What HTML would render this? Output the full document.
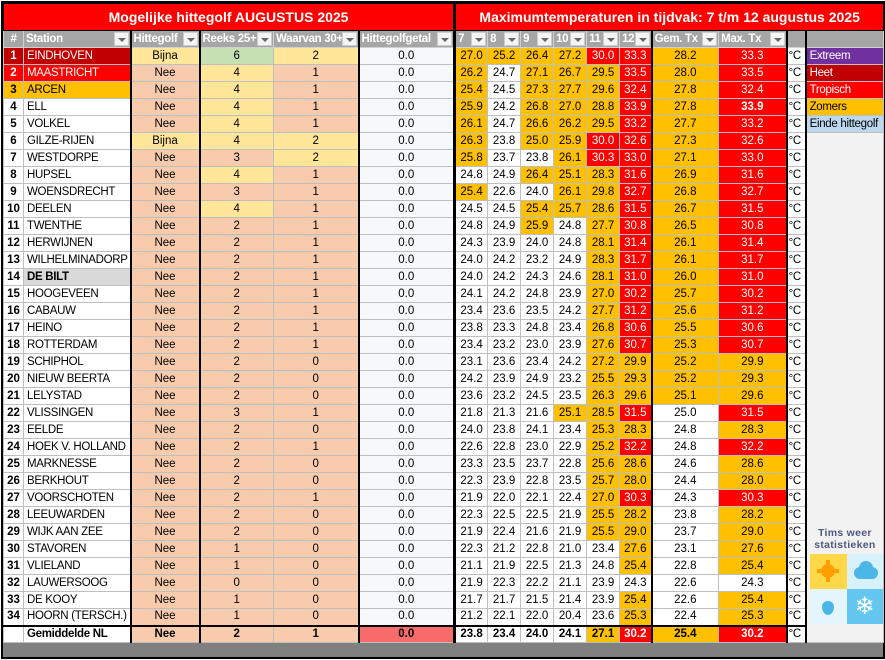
<!DOCTYPE html>
<html><head><meta charset="utf-8">
<style>
*{margin:0;padding:0;box-sizing:border-box}
body{width:885px;height:660px;background:#fff;font-family:"Liberation Sans",Arial,sans-serif;overflow:hidden}
#wrap{position:absolute;left:1px;top:1px;width:884px;height:658px;border:2px solid #000;background:#808080}
table{position:absolute;left:0;top:0;border-collapse:collapse;table-layout:fixed;width:880px;font-size:11.5px}
td{height:17px;border:1px solid #bfbfbf;text-align:center;white-space:nowrap;overflow:hidden;padding:0;line-height:15px;color:#000;background:#fff}
tr.t td{height:27px;background:#f00;color:#fff;font-weight:bold;font-size:14px;border:1px solid #000}
tr.hd td{background:#a6a6a6;color:#fff;font-weight:bold;text-align:left;padding-left:2px;position:relative;border-color:#d0d0d0;letter-spacing:-0.3px;font-size:11.5px}
.dd{position:absolute;right:1px;top:1px;width:15px;height:14px;background:#f4f4f4;border:1px solid #ccc}
.dd:after{content:"";position:absolute;left:3px;top:5px;border-left:4px solid transparent;border-right:4px solid transparent;border-top:4px solid #666}
td.n{font-weight:bold}
td.s{text-align:left;padding-left:3px;letter-spacing:-0.3px}
td.y{background:#ffe699}
td.p{background:#f8cbad}
td.g{background:#c6e0b4}
td.h{background:#f7f8fc}
td.o{background:#ffc000}
td.r{background:#f00;color:#fff}
td.c{border-left:2px solid #000;border-right:2px solid #000;text-align:left;padding-left:1px;letter-spacing:-0.3px}
td.L{text-align:left;padding-left:3px;background:#f2f2f2;letter-spacing:-0.3px}
.k3{border-left:2px solid #000!important}
.k7{border-left:3px solid #000!important}
tr.av td{border-top:2px solid #000;font-weight:bold}
</style></head><body>
<div id="wrap">
<table>
<colgroup><col style="width:20px"><col style="width:107px"><col style="width:69px"><col style="width:74px"><col style="width:85px"><col style="width:96px"><col style="width:33px"><col style="width:33px"><col style="width:33px"><col style="width:33px"><col style="width:33px"><col style="width:32px"><col style="width:67px"><col style="width:68px"><col style="width:19px"><col style="width:78px"></colgroup>
<tr class="t"><td colspan="6">Mogelijke hittegolf AUGUSTUS 2025</td><td colspan="10" class="k7">Maximumtemperaturen in tijdvak: 7 t/m 12 augustus 2025</td></tr>
<tr class="hd"><td style="text-align:center;padding:0">#</td><td>Station<span class="dd"></span></td><td class="k3">Hittegolf<span class="dd"></span></td><td class="k3">Reeks 25+<span class="dd"></span></td><td>Waarvan 30+<span class="dd"></span></td><td class="k3">Hittegolfgetal<span class="dd"></span></td><td class="k7">7<span class="dd"></span></td><td>8<span class="dd"></span></td><td>9<span class="dd"></span></td><td>10<span class="dd"></span></td><td>11<span class="dd"></span></td><td>12<span class="dd"></span></td><td class="k3">Gem. Tx<span class="dd"></span></td><td>Max. Tx<span class="dd"></span></td><td class="k3"></td><td class="k3"></td></tr>
<tr><td class="n" style="background:#c00000;color:#fff">1</td><td class="s" style="background:#c00000;color:#fff">EINDHOVEN</td><td class="y k3">Bijna</td><td class="g k3">6</td><td class="y">2</td><td class="h k3">0.0</td><td class="o k7">27.0</td><td class="o">25.2</td><td class="o">26.4</td><td class="o">27.2</td><td class="r">30.0</td><td class="r">33.3</td><td class="o k3">28.2</td><td class="r">33.3</td><td class="c">°C</td><td class="L" style="background:#7030a0;color:#fff">Extreem</td></tr>
<tr><td class="n" style="background:#f00;color:#fff">2</td><td class="s" style="background:#f00;color:#fff">MAASTRICHT</td><td class="p k3">Nee</td><td class="y k3">4</td><td class="p">1</td><td class="h k3">0.0</td><td class="o k7">26.2</td><td>24.7</td><td class="o">27.1</td><td class="o">26.7</td><td class="o">29.5</td><td class="r">33.5</td><td class="o k3">28.0</td><td class="r">33.5</td><td class="c">°C</td><td class="L" style="background:#c00000;color:#fff">Heet</td></tr>
<tr><td class="n" style="background:#ffc000">3</td><td class="s" style="background:#ffc000">ARCEN</td><td class="p k3">Nee</td><td class="y k3">4</td><td class="p">1</td><td class="h k3">0.0</td><td class="o k7">25.4</td><td>24.5</td><td class="o">27.3</td><td class="o">27.7</td><td class="o">29.6</td><td class="r">32.4</td><td class="o k3">27.8</td><td class="r">32.4</td><td class="c">°C</td><td class="L" style="background:#f00;color:#fff">Tropisch</td></tr>
<tr><td class="n">4</td><td class="s">ELL</td><td class="p k3">Nee</td><td class="y k3">4</td><td class="p">1</td><td class="h k3">0.0</td><td class="o k7">25.9</td><td>24.2</td><td class="o">26.8</td><td class="o">27.0</td><td class="o">28.8</td><td class="r">33.9</td><td class="o k3">27.8</td><td class="r" style="font-weight:bold">33.9</td><td class="c">°C</td><td class="L" style="background:#ffc000">Zomers</td></tr>
<tr><td class="n">5</td><td class="s">VOLKEL</td><td class="p k3">Nee</td><td class="y k3">4</td><td class="p">1</td><td class="h k3">0.0</td><td class="o k7">26.1</td><td>24.7</td><td class="o">26.6</td><td class="o">26.2</td><td class="o">29.5</td><td class="r">33.2</td><td class="o k3">27.7</td><td class="r">33.2</td><td class="c">°C</td><td class="L" style="background:#bdd7ee">Einde hittegolf</td></tr>
<tr><td class="n">6</td><td class="s">GILZE-RIJEN</td><td class="y k3">Bijna</td><td class="y k3">4</td><td class="y">2</td><td class="h k3">0.0</td><td class="o k7">26.3</td><td>23.8</td><td class="o">25.0</td><td class="o">25.9</td><td class="r">30.0</td><td class="r">32.6</td><td class="o k3">27.3</td><td class="r">32.6</td><td class="c">°C</td><td class="L" rowspan="30" style="vertical-align:bottom;padding:0;position:relative">
<div style="position:absolute;left:0;right:0;top:394px;text-align:center;font-size:10.5px;line-height:12px;color:#4d5a80;font-weight:bold;letter-spacing:0.3px">Tims weer<br>statistieken</div>
<div style="position:absolute;left:3px;top:421px;width:73px;height:70px">
<div style="position:absolute;left:0;top:0;width:37px;height:35px;background:#ffd84a"><div style="position:absolute;left:11px;top:10px;width:14px;height:14px;border-radius:50%;background:#ffa000"></div><div style="position:absolute;left:7px;top:15px;width:22px;height:4px;background:#ffa000"></div><div style="position:absolute;left:16px;top:6px;width:4px;height:22px;background:#ffa000"></div></div>
<div style="position:absolute;left:37px;top:0;width:36px;height:35px;background:#d8f2fc"><div style="position:absolute;left:7px;top:13px;width:24px;height:12px;border-radius:8px;background:#4ab7e8"></div><div style="position:absolute;left:12px;top:7px;width:14px;height:14px;border-radius:50%;background:#4ab7e8"></div></div>
<div style="position:absolute;left:0;top:35px;width:37px;height:35px;background:#e4f5fd"><div style="position:absolute;left:12px;top:12px;width:12px;height:14px;border-radius:50% 50% 50% 50%/40% 40% 60% 60%;background:#4ab7e8"></div></div>
<div style="position:absolute;left:37px;top:35px;width:36px;height:35px;background:#64c7f0;color:#fff;font-size:24px;line-height:35px;text-align:center">❄</div>
</div></td></tr>
<tr><td class="n">7</td><td class="s">WESTDORPE</td><td class="p k3">Nee</td><td class="p k3">3</td><td class="y">2</td><td class="h k3">0.0</td><td class="o k7">25.8</td><td>23.7</td><td>23.8</td><td class="o">26.1</td><td class="r">30.3</td><td class="r">33.0</td><td class="o k3">27.1</td><td class="r">33.0</td><td class="c">°C</td></tr>
<tr><td class="n">8</td><td class="s">HUPSEL</td><td class="p k3">Nee</td><td class="y k3">4</td><td class="p">1</td><td class="h k3">0.0</td><td class="k7">24.8</td><td>24.9</td><td class="o">26.4</td><td class="o">25.1</td><td class="o">28.3</td><td class="r">31.6</td><td class="o k3">26.9</td><td class="r">31.6</td><td class="c">°C</td></tr>
<tr><td class="n">9</td><td class="s">WOENSDRECHT</td><td class="p k3">Nee</td><td class="p k3">3</td><td class="p">1</td><td class="h k3">0.0</td><td class="o k7">25.4</td><td>22.6</td><td>24.0</td><td class="o">26.1</td><td class="o">29.8</td><td class="r">32.7</td><td class="o k3">26.8</td><td class="r">32.7</td><td class="c">°C</td></tr>
<tr><td class="n">10</td><td class="s">DEELEN</td><td class="p k3">Nee</td><td class="y k3">4</td><td class="p">1</td><td class="h k3">0.0</td><td class="k7">24.5</td><td>24.5</td><td class="o">25.4</td><td class="o">25.7</td><td class="o">28.6</td><td class="r">31.5</td><td class="o k3">26.7</td><td class="r">31.5</td><td class="c">°C</td></tr>
<tr><td class="n">11</td><td class="s">TWENTHE</td><td class="p k3">Nee</td><td class="p k3">2</td><td class="p">1</td><td class="h k3">0.0</td><td class="k7">24.8</td><td>24.9</td><td class="o">25.9</td><td>24.8</td><td class="o">27.7</td><td class="r">30.8</td><td class="o k3">26.5</td><td class="r">30.8</td><td class="c">°C</td></tr>
<tr><td class="n">12</td><td class="s">HERWIJNEN</td><td class="p k3">Nee</td><td class="p k3">2</td><td class="p">1</td><td class="h k3">0.0</td><td class="k7">24.3</td><td>23.9</td><td>24.0</td><td>24.8</td><td class="o">28.1</td><td class="r">31.4</td><td class="o k3">26.1</td><td class="r">31.4</td><td class="c">°C</td></tr>
<tr><td class="n">13</td><td class="s">WILHELMINADORP</td><td class="p k3">Nee</td><td class="p k3">2</td><td class="p">1</td><td class="h k3">0.0</td><td class="k7">24.0</td><td>24.2</td><td>23.2</td><td>24.9</td><td class="o">28.3</td><td class="r">31.7</td><td class="o k3">26.1</td><td class="r">31.7</td><td class="c">°C</td></tr>
<tr><td class="n">14</td><td class="s" style="background:#d9d9d9;font-weight:bold">DE BILT</td><td class="p k3">Nee</td><td class="p k3">2</td><td class="p">1</td><td class="h k3">0.0</td><td class="k7">24.0</td><td>24.2</td><td>24.3</td><td>24.6</td><td class="o">28.1</td><td class="r">31.0</td><td class="o k3">26.0</td><td class="r">31.0</td><td class="c">°C</td></tr>
<tr><td class="n">15</td><td class="s">HOOGEVEEN</td><td class="p k3">Nee</td><td class="p k3">2</td><td class="p">1</td><td class="h k3">0.0</td><td class="k7">24.1</td><td>24.2</td><td>24.8</td><td>23.9</td><td class="o">27.0</td><td class="r">30.2</td><td class="o k3">25.7</td><td class="r">30.2</td><td class="c">°C</td></tr>
<tr><td class="n">16</td><td class="s">CABAUW</td><td class="p k3">Nee</td><td class="p k3">2</td><td class="p">1</td><td class="h k3">0.0</td><td class="k7">23.4</td><td>23.6</td><td>23.5</td><td>24.2</td><td class="o">27.7</td><td class="r">31.2</td><td class="o k3">25.6</td><td class="r">31.2</td><td class="c">°C</td></tr>
<tr><td class="n">17</td><td class="s">HEINO</td><td class="p k3">Nee</td><td class="p k3">2</td><td class="p">1</td><td class="h k3">0.0</td><td class="k7">23.8</td><td>23.3</td><td>24.8</td><td>23.4</td><td class="o">26.8</td><td class="r">30.6</td><td class="o k3">25.5</td><td class="r">30.6</td><td class="c">°C</td></tr>
<tr><td class="n">18</td><td class="s">ROTTERDAM</td><td class="p k3">Nee</td><td class="p k3">2</td><td class="p">1</td><td class="h k3">0.0</td><td class="k7">23.4</td><td>23.2</td><td>23.0</td><td>23.9</td><td class="o">27.6</td><td class="r">30.7</td><td class="o k3">25.3</td><td class="r">30.7</td><td class="c">°C</td></tr>
<tr><td class="n">19</td><td class="s">SCHIPHOL</td><td class="p k3">Nee</td><td class="p k3">2</td><td class="p">0</td><td class="h k3">0.0</td><td class="k7">23.1</td><td>23.6</td><td>23.4</td><td>24.2</td><td class="o">27.2</td><td class="o">29.9</td><td class="o k3">25.2</td><td class="o">29.9</td><td class="c">°C</td></tr>
<tr><td class="n">20</td><td class="s">NIEUW BEERTA</td><td class="p k3">Nee</td><td class="p k3">2</td><td class="p">0</td><td class="h k3">0.0</td><td class="k7">24.2</td><td>23.9</td><td>24.9</td><td>23.2</td><td class="o">25.5</td><td class="o">29.3</td><td class="o k3">25.2</td><td class="o">29.3</td><td class="c">°C</td></tr>
<tr><td class="n">21</td><td class="s">LELYSTAD</td><td class="p k3">Nee</td><td class="p k3">2</td><td class="p">0</td><td class="h k3">0.0</td><td class="k7">23.6</td><td>23.2</td><td>24.5</td><td>23.5</td><td class="o">26.3</td><td class="o">29.6</td><td class="o k3">25.1</td><td class="o">29.6</td><td class="c">°C</td></tr>
<tr><td class="n">22</td><td class="s">VLISSINGEN</td><td class="p k3">Nee</td><td class="p k3">3</td><td class="p">1</td><td class="h k3">0.0</td><td class="k7">21.8</td><td>21.3</td><td>21.6</td><td class="o">25.1</td><td class="o">28.5</td><td class="r">31.5</td><td class="k3">25.0</td><td class="r">31.5</td><td class="c">°C</td></tr>
<tr><td class="n">23</td><td class="s">EELDE</td><td class="p k3">Nee</td><td class="p k3">2</td><td class="p">0</td><td class="h k3">0.0</td><td class="k7">24.0</td><td>23.8</td><td>24.1</td><td>23.4</td><td class="o">25.3</td><td class="o">28.3</td><td class="k3">24.8</td><td class="o">28.3</td><td class="c">°C</td></tr>
<tr><td class="n">24</td><td class="s">HOEK V. HOLLAND</td><td class="p k3">Nee</td><td class="p k3">2</td><td class="p">1</td><td class="h k3">0.0</td><td class="k7">22.6</td><td>22.8</td><td>23.0</td><td>22.9</td><td class="o">25.2</td><td class="r">32.2</td><td class="k3">24.8</td><td class="r">32.2</td><td class="c">°C</td></tr>
<tr><td class="n">25</td><td class="s">MARKNESSE</td><td class="p k3">Nee</td><td class="p k3">2</td><td class="p">0</td><td class="h k3">0.0</td><td class="k7">23.3</td><td>23.5</td><td>23.7</td><td>22.8</td><td class="o">25.6</td><td class="o">28.6</td><td class="k3">24.6</td><td class="o">28.6</td><td class="c">°C</td></tr>
<tr><td class="n">26</td><td class="s">BERKHOUT</td><td class="p k3">Nee</td><td class="p k3">2</td><td class="p">0</td><td class="h k3">0.0</td><td class="k7">22.3</td><td>23.9</td><td>22.8</td><td>23.5</td><td class="o">25.7</td><td class="o">28.0</td><td class="k3">24.4</td><td class="o">28.0</td><td class="c">°C</td></tr>
<tr><td class="n">27</td><td class="s">VOORSCHOTEN</td><td class="p k3">Nee</td><td class="p k3">2</td><td class="p">1</td><td class="h k3">0.0</td><td class="k7">21.9</td><td>22.0</td><td>22.1</td><td>22.4</td><td class="o">27.0</td><td class="r">30.3</td><td class="k3">24.3</td><td class="r">30.3</td><td class="c">°C</td></tr>
<tr><td class="n">28</td><td class="s">LEEUWARDEN</td><td class="p k3">Nee</td><td class="p k3">2</td><td class="p">0</td><td class="h k3">0.0</td><td class="k7">22.3</td><td>22.5</td><td>22.5</td><td>21.9</td><td class="o">25.5</td><td class="o">28.2</td><td class="k3">23.8</td><td class="o">28.2</td><td class="c">°C</td></tr>
<tr><td class="n">29</td><td class="s">WIJK AAN ZEE</td><td class="p k3">Nee</td><td class="p k3">2</td><td class="p">0</td><td class="h k3">0.0</td><td class="k7">21.9</td><td>22.4</td><td>21.6</td><td>21.9</td><td class="o">25.5</td><td class="o">29.0</td><td class="k3">23.7</td><td class="o">29.0</td><td class="c">°C</td></tr>
<tr><td class="n">30</td><td class="s">STAVOREN</td><td class="p k3">Nee</td><td class="p k3">1</td><td class="p">0</td><td class="h k3">0.0</td><td class="k7">22.3</td><td>21.2</td><td>22.8</td><td>21.0</td><td>23.4</td><td class="o">27.6</td><td class="k3">23.1</td><td class="o">27.6</td><td class="c">°C</td></tr>
<tr><td class="n">31</td><td class="s">VLIELAND</td><td class="p k3">Nee</td><td class="p k3">1</td><td class="p">0</td><td class="h k3">0.0</td><td class="k7">21.1</td><td>21.9</td><td>22.5</td><td>21.3</td><td>24.8</td><td class="o">25.4</td><td class="k3">22.8</td><td class="o">25.4</td><td class="c">°C</td></tr>
<tr><td class="n">32</td><td class="s">LAUWERSOOG</td><td class="p k3">Nee</td><td class="p k3">0</td><td class="p">0</td><td class="h k3">0.0</td><td class="k7">21.9</td><td>22.3</td><td>22.2</td><td>21.1</td><td>23.9</td><td>24.3</td><td class="k3">22.6</td><td>24.3</td><td class="c">°C</td></tr>
<tr><td class="n">33</td><td class="s">DE KOOY</td><td class="p k3">Nee</td><td class="p k3">1</td><td class="p">0</td><td class="h k3">0.0</td><td class="k7">21.7</td><td>21.7</td><td>21.5</td><td>21.4</td><td>23.9</td><td class="o">25.4</td><td class="k3">22.6</td><td class="o">25.4</td><td class="c">°C</td></tr>
<tr><td class="n">34</td><td class="s">HOORN (TERSCH.)</td><td class="p k3">Nee</td><td class="p k3">1</td><td class="p">0</td><td class="h k3">0.0</td><td class="k7">21.2</td><td>22.1</td><td>22.0</td><td>20.4</td><td>23.6</td><td class="o">25.3</td><td class="k3">22.4</td><td class="o">25.3</td><td class="c">°C</td></tr>
<tr class="av"><td></td><td class="s">Gemiddelde NL</td><td class="p k3">Nee</td><td class="p k3">2</td><td class="p">1</td><td class="k3" style="background:#f86b6b">0.0</td><td class="k7">23.8</td><td>23.4</td><td>24.0</td><td>24.1</td><td class="o">27.1</td><td class="r">30.2</td><td class="o k3">25.4</td><td class="r">30.2</td><td class="c" style="font-weight:normal">°C</td></tr>
</table>
</div>
</body></html>
